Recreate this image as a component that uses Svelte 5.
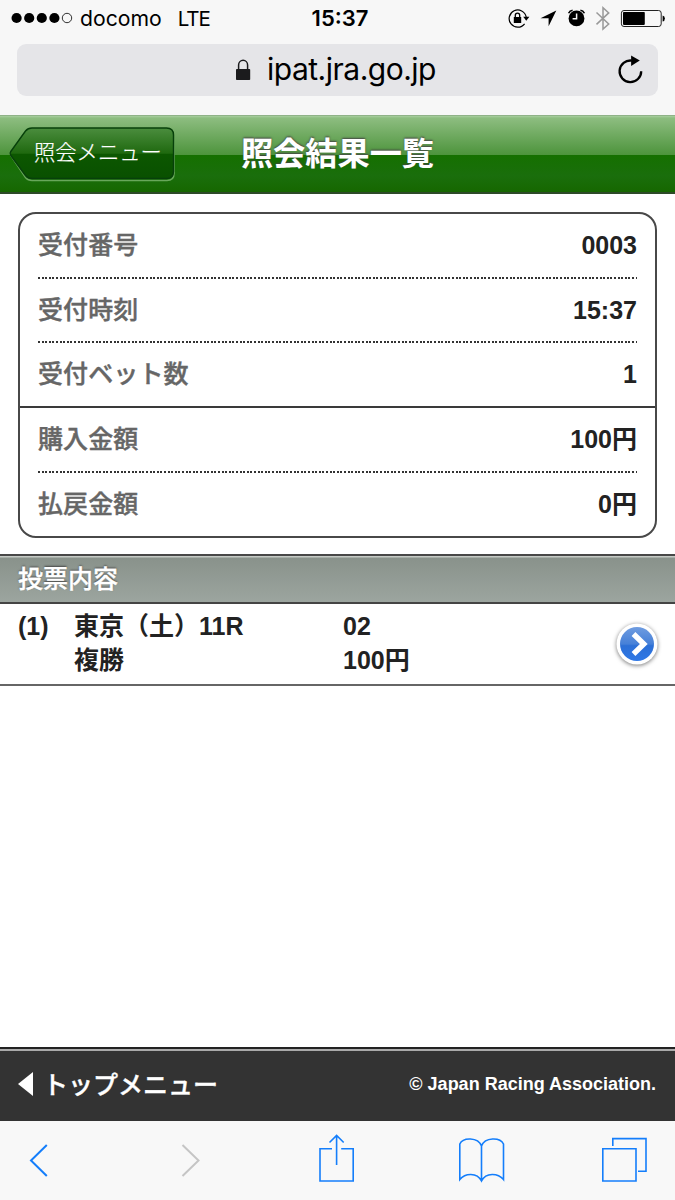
<script>
    // Summary box, split into groups by a solid line
    const groups = [
        [
            { label: '受付番号', value: '0003' },
            { label: '受付時刻', value: '15:37' },
            { label: '受付ベット数', value: '1' }
        ],
        [
            { label: '購入金額', value: '100円' },
            { label: '払戻金額', value: '0円' }
        ]
    ];

    const bets = [
        { no: 1, race: '東京（土）11R', type: '複勝', horse: '02', amount: '100円' }
    ];

    const signal = [true, true, true, true, false];
</script>

<div class="screen">
    <div class="status">
        <div class="carrier">
            <svg width="62" height="12" viewBox="0 0 62 12">
                {#each signal as on, i}
                    <circle cx={5.6 + i * 12.6} cy="6" r={on ? 5.1 : 4.7} fill={on ? '#000' : 'none'} stroke="#000" stroke-width={on ? 0 : 0.8} />
                {/each}
            </svg>
            <span class="name">docomo</span>
            <span class="lte">LTE</span>
        </div>
        <div class="clock">15:37</div>
        <svg class="indicators" width="160" height="26" viewBox="505 5 160 26">
            <!-- rotation lock -->
            <path d="M524.6 23.8A8.6 8.6 0 1 1 526.2 17" fill="none" stroke="#000" stroke-width="1.2" />
            <path d="M523.2 16.8H529.4L526.3 20.7Z" />
            <rect x="513.8" y="17" width="7.4" height="6" />
            <path d="M515.3 17.5V15.3a2.2 2.2 0 0 1 4.400 0v2.2" fill="none" stroke="#000" stroke-width="1.3" />
            <!-- location -->
            <path d="M556.3 10.5L540.500 18.2H548.600V26.3Z" />
            <!-- alarm -->
            <circle cx="576.5" cy="18.4" r="7.9" />
            <path d="M576.6 13.6v5.2h-4" fill="none" stroke="#f7f7f7" stroke-width="1.5" />
            <path d="M568.6 13.2Q569.8 10.5 572.6 10.2M580.4 10.2Q583.2 10.5 584.4 13.2" fill="none" stroke="#000" stroke-width="1.6" />
            <!-- bluetooth -->
            <path d="M596.5 12.5L608.7 24L603 29V7.8L608.7 12.9L596.5 24.4" fill="none" stroke="#999" stroke-width="1.5" />
            <!-- battery -->
            <rect x="621.4" y="10.5" width="39.8" height="16" rx="2.6" fill="none" stroke="#222" stroke-width="1" />
            <rect x="623" y="12.1" width="21.8" height="12.8" rx="0.8" />
            <path d="M662.6 15.4q2.3.5 2.3 3t-2.3 3Z" />
        </svg>
    </div>

    <div class="address">
        <div class="field">
            <svg class="lock" width="16" height="22" viewBox="0 0 16 22">
                <rect x="1" y="10" width="14.2" height="11" rx="0.8" fill="#1b1b1d" />
                <path d="M3.6 10.5V6a4.5 4.7 0 0 1 9 0v4.5" fill="none" stroke="#1b1b1d" stroke-width="1.5" />
            </svg>
            <span class="host">ipat.jra.go.jp</span>
            <svg class="reload" width="28" height="30" viewBox="616 55 28 30">
                <path d="M631.8 60.6A10.8 10.8 0 1 0 641.2 71.2" fill="none" stroke="#000" stroke-width="2.3" />
                <path d="M631.1 55.6V65.9L639.8 60.5Z" />
            </svg>
        </div>
    </div>

    <header>
        <a class="back" href="#menu">
            <svg width="168" height="56" viewBox="0 0 168 56">
                <defs>
                    <linearGradient id="btn" x1="0" y1="0" x2="0" y2="1">
                        <stop offset="0" stop-color="#4b8d3e" />
                        <stop offset="0.5" stop-color="#1f690f" />
                        <stop offset="0.52" stop-color="#0c5700" />
                        <stop offset="1" stop-color="#095000" />
                    </linearGradient>
                </defs>
                <path d="M22 3.5H159q7 0 7 7V47.5q0 7-7 7H24q-4 0-6.5-3L2.5 29" fill="none" stroke="#68a75a" stroke-width="1.6" />
                <path d="M24 2H158.5q7 0 7 7V45.5q0 7-7 7H24q-4 0-6.5-3L2.8 29.5q-1.5-2 0-4L17.5 5q2.5-3 6.5-3Z" fill="url(#btn)" stroke="#07400a" stroke-width="1.4" />
            </svg>
            <span>照会メニュー</span>
        </a>
        <h1>照会結果一覧</h1>
    </header>

    <main>
        <div class="summary">
            {#each groups as group}
                <dl>
                    {#each group as item}
                        <div class="item">
                            <dt>{item.label}</dt>
                            <dd>{item.value}</dd>
                        </div>
                    {/each}
                </dl>
            {/each}
        </div>

        <h2>投票内容</h2>
        {#each bets as bet}
            <div class="bet">
                <div class="no">({bet.no})</div>
                <div class="race">{bet.race}<br />{bet.type}</div>
                <div class="stake">{bet.horse}<br />{bet.amount}</div>
                <svg width="50" height="52" viewBox="0 0 50 52">
                    <defs>
                        <linearGradient id="ball" x1="0" y1="0" x2="0" y2="1">
                            <stop offset="0" stop-color="#6f9ce0" />
                            <stop offset="0.5" stop-color="#4680d8" />
                            <stop offset="0.55" stop-color="#2c6fd6" />
                            <stop offset="1" stop-color="#2f78e6" />
                        </linearGradient>
                    </defs>
                    <circle class="ring" cx="25" cy="25" r="20.5" fill="#fff" />
                    <circle cx="25" cy="25" r="17" fill="url(#ball)" />
                    <path d="M21.5 15L31.8 25L21.5 35" fill="none" stroke="#fff" stroke-width="5.4" />
                </svg>
            </div>
        {/each}
    </main>

    <footer>
        <a href="#top">
            <svg width="16" height="24" viewBox="0 0 16 24"><path d="M0 12L15 0V24Z" fill="#fff" /></svg>
            <span>トップメニュー</span>
        </a>
        <small>© Japan Racing Association.</small>
    </footer>

    <nav>
        <svg width="675" height="79" viewBox="0 1121 675 79" fill="none" stroke="#147efb" stroke-width="1.6">
            <path d="M46.8 1145L31 1160.5L46.8 1176" stroke-width="2" />
            <path d="M182.5 1145L198.5 1160.5L182.5 1176" stroke="#c5c5c5" stroke-width="2" />
            <path d="M332 1148.7H320V1181H353.2V1148.7H341.2M336.6 1165V1135.5M329.5 1142.5L336.6 1135.4L343.7 1142.5" />
            <path d="M481.5 1181V1146C485 1137 500 1137 503.5 1144V1179.5C498 1173 486 1172 481.5 1181C477 1172 465 1173 459.8 1179.5V1144C463 1137 478 1137 481.5 1146" />
            <path d="M602.8 1148.7H636V1181H602.8ZM612.8 1146V1138.6H646V1171.2H638" />
        </svg>
    </nav>
</div>

<style>
    :global(body) {
        margin: 0;
        background: #fff;
    }

    .screen {
        display: flex;
        flex-direction: column;
        width: 675px;
        height: 1200px;
        overflow: hidden;
        color: #222;
        font-family: "Liberation Sans", "Noto Sans CJK JP", sans-serif;
        font-size: 25px;
    }

    a {
        color: #fff;
        text-decoration: none;
    }

    svg {
        flex: none;
        display: block;
    }

    .status {
        display: grid;
        grid-template-columns: 1fr auto 1fr;
        align-items: center;
        height: 37px;
        padding: 0 10px 0 11px;
        background: #f7f7f7;
        color: #000;
        font-family: Inter, sans-serif;
        font-size: 21.5px;
    }

    .status > * {
        margin-top: -1px;
    }

    .carrier {
        display: flex;
        align-items: center;
    }

    .name {
        margin-left: 7px;
        font-size: 21.2px;
    }

    .lte {
        margin-left: 16px;
        font-size: 20.5px;
        letter-spacing: -1px;
    }

    .clock {
        padding-left: 4px;
        font-size: 22px;
        font-weight: 600;
    }

    .indicators {
        justify-self: end;
    }

    .address {
        box-sizing: border-box;
        height: 78px;
        padding: 7px 17px 19px;
        background: #f7f7f7;
    }

    .field {
        display: flex;
        align-items: center;
        height: 52px;
        padding: 0 14px 0 218px;
        border-radius: 9px;
        background: #e5e5e8;
        color: #000;
        font-family: Inter, sans-serif;
        font-size: 30px;
        letter-spacing: -0.5px;
    }

    .host {
        margin: -2px 0 0 16px;
    }

    .reload {
        margin-left: auto;
    }

    header {
        box-sizing: border-box;
        display: grid;
        grid-template-columns: 168px 1fr 168px;
        align-items: center;
        height: 79px;
        padding: 0 8px;
        border-top: 1px solid #8fb287;
        border-bottom: 2px solid #2d4a28;
        background: linear-gradient(#a9cf9f 0, #8dbd80 2px, #4d943c 39px, #157000 39px, #1a6e0c 60px, #166700 100%);
    }

    .back {
        position: relative;
        height: 56px;
    }

    .back span {
        position: absolute;
        left: 26px;
        top: 1px;
        line-height: 52px;
        font-size: 21.3px;
        font-weight: 300;
        white-space: nowrap;
        -webkit-text-stroke: 0.2px #fff;
    }

    h1 {
        margin: 0;
        color: #fff;
        font-size: 32.2px;
        line-height: 76px;
        font-weight: bold;
        text-align: center;
        text-shadow: 0 -1px 2px #444;
    }

    main {
        flex: 1;
        background: #fff;
    }

    .summary {
        box-sizing: border-box;
        height: 326px;
        margin: 18px 18px 16px;
        border: 2px solid #484848;
        border-radius: 18px;
    }

    dl {
        margin: 0;
        padding: 0 18px;
    }

    dl + dl {
        border-top: 2px solid #3a3a3a;
    }

    .item {
        display: flex;
        justify-content: space-between;
        height: 62.7px;
        line-height: 62px;
    }

    .item + .item {
        padding-top: 2px;
        background: repeating-linear-gradient(90deg, #333 0 2px, #fff 2px 3.6px) top / 100% 2px no-repeat;
    }

    dt {
        color: #666;
        font-weight: 500;
        letter-spacing: 0.1px;
        -webkit-text-stroke: 0.4px #666;
    }

    dd {
        margin: 0;
        font-weight: bold;
    }

    h2 {
        box-sizing: border-box;
        height: 50px;
        margin: 0;
        padding-left: 18px;
        border-top: 2px solid #484848;
        border-bottom: 2px solid #444;
        background: linear-gradient(#c5cac5 0, #c5cac5 1px, #89928b 2px, #9ca59f 100%);
        color: #fff;
        font-size: 25px;
        line-height: 46px;
        font-weight: 500;
        text-shadow: 0 -1px 2px #444;
        -webkit-text-stroke: 0.4px #fff;
    }

    .bet {
        box-sizing: border-box;
        display: grid;
        grid-template-columns: 56px 269px 1fr 50px;
        height: 82px;
        padding: 5px 13px 0 18px;
        border-bottom: 2px solid #666;
        font-weight: bold;
        line-height: 34px;
    }

    .bet svg {
        margin-top: 10px;
    }

    .ring {
        filter: drop-shadow(0 1px 2px #777);
    }

    footer {
        box-sizing: border-box;
        display: flex;
        align-items: center;
        justify-content: space-between;
        height: 74px;
        padding: 0 19px 2px 18px;
        border-top: 2px solid #222;
        background: linear-gradient(#aaa 2px, #333 2px);
        color: #fff;
    }

    footer a {
        display: flex;
        align-items: center;
        gap: 9px;
        font-weight: 500;
        -webkit-text-stroke: 0.4px #fff;
    }

    footer span {
        margin-top: -2px;
    }

    small {
        font-size: 18px;
        font-weight: bold;
    }

    nav {
        height: 79px;
        background: #f8f8f8;
    }
</style>
